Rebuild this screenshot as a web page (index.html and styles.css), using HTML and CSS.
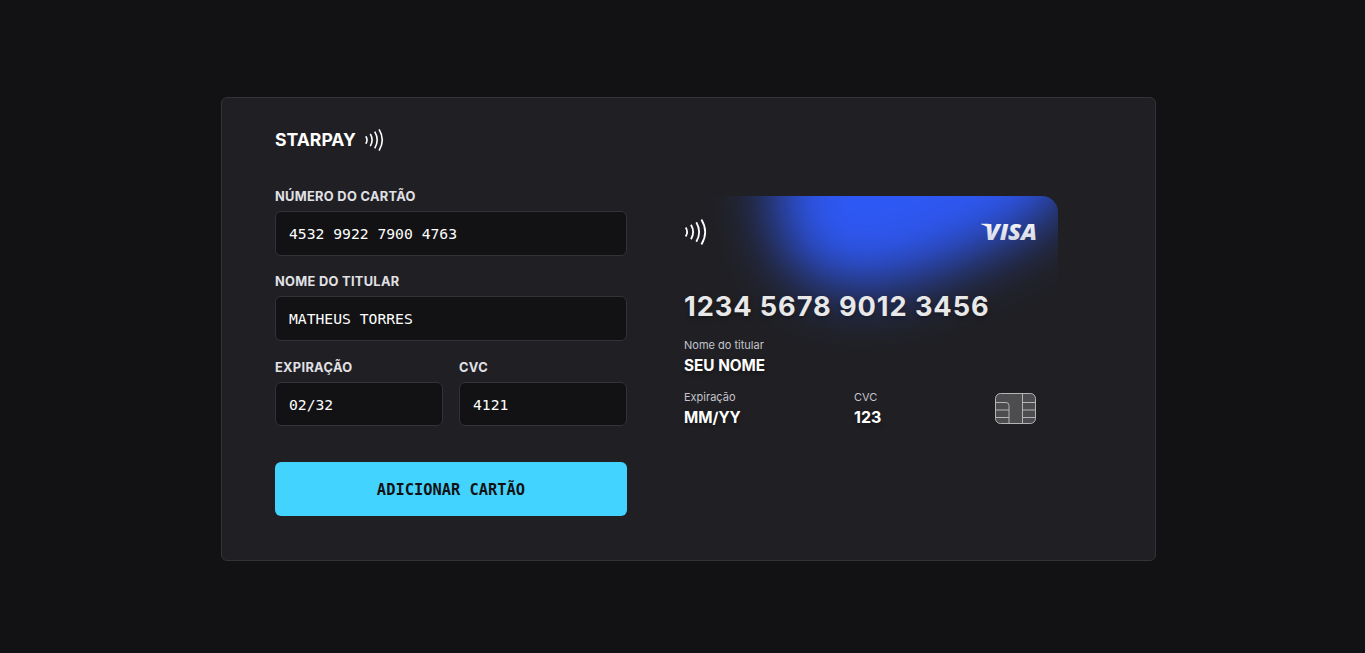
FILE: index.html
```
<!DOCTYPE html>
<html lang="pt-BR">
<head>
<meta charset="utf-8">
<title>Starpay</title>
<link rel="stylesheet" href="styles.css">
</head>
<body>
<main class="panel">
  <header class="brand">
    <span>STARPAY</span>
    <svg class="brand-waves" viewBox="0 0 22 26" fill="none" stroke="currentColor" stroke-width="1.9"><path d="M.7 8.5Q3.6 13 .7 17.4M6 5.7Q10.3 13 6 20.2M11.3 3.2Q17 13 11.3 22.8M16.4.5Q24 13 16.4 25.5"/></svg>
  </header>
  <div class="content">
    <form class="form">
      <label class="field"><span>NÚMERO DO CARTÃO</span><input type="text" value="4532 9922 7900 4763"></label>
      <label class="field"><span>NOME DO TITULAR</span><input type="text" value="MATHEUS TORRES"></label>
      <div class="pair">
        <label class="field"><span>EXPIRAÇÃO</span><input type="text" value="02/32"></label>
        <label class="field"><span>CVC</span><input type="text" value="4121"></label>
      </div>
      <button class="submit" type="button">ADICIONAR CARTÃO</button>
    </form>
    <section class="card">
      <svg class="glow" viewBox="0 0 396 252"><path d="M114-90L114 20Q126 94 208 91Q300 76 399 10L426-90Z" fill="#2e58f3"/></svg>
      <div class="card-top">
        <svg class="card-waves" viewBox="0 0 22 26" fill="none" stroke="currentColor" stroke-width="1.8"><path d="M.7 8.5Q3.6 13 .7 17.4M6 5.7Q10.3 13 6 20.2M11.3 3.2Q17 13 11.3 22.8M16.4.5Q24 13 16.4 25.5"/></svg>
        <svg class="visa" viewBox="0 0 56 18">
          <defs><linearGradient id="silver" x1="0" y1="0" x2="0" y2="1"><stop offset="0" stop-color="#fff"/><stop offset="1" stop-color="#cdd1e0"/></linearGradient></defs>
          <path d="M0 .8H7.2Q8.8 1 9.2 2.5L10.5 9Q7.5 3 0 1.2Z" fill="#f4f5fb"/>
          <text x="4" y="16.6" textLength="52" lengthAdjust="spacingAndGlyphs" fill="url(#silver)">VISA</text>
        </svg>
      </div>
      <div class="number">1234 5678 9012 3456</div>
      <div class="holder"><span class="caption">Nome do titular</span><strong>SEU NOME</strong></div>
      <div class="details">
        <div><span class="caption">Expiração</span><strong>MM/YY</strong></div>
        <div><span class="caption">CVC</span><strong class="digits">123</strong></div>
        <svg class="chip" viewBox="0 0 42 32" fill="none" stroke="#b4b4b6"><rect x=".5" y=".5" width="40" height="30" rx="5" fill="#4d4d50"/><path d="M.5 9.5H11Q14 9.5 14 12.5V30.5M27.5 .5V30.5M.5 17H14M.5 24.5H14M27.5 9.5H40.5M27.5 17H40.5M27.5 24.5H40.5"/></svg>
      </div>
    </section>
  </div>
</main>
</body>
</html>
```
FILE: styles.css
```
* { box-sizing: border-box; }
body {
  margin: 0;
  height: 653px;
  padding: 97px 0 0 221px;
  overflow: hidden;
  background: #121214;
  color: #fff;
  font-family: Inter, sans-serif;
}
.panel {
  width: 935px;
  height: 464px;
  padding: 28px 53px;
  background: #202024;
  border: 1px solid #323238;
  border-radius: 6px;
}
.brand {
  display: flex;
  align-items: center;
  gap: 9px;
  height: 28px;
  font-size: 17.6px;
  line-height: 28px;
  font-weight: 700;
}
.brand-waves { width: 19px; height: 22px; }
.content { display: flex; gap: 35px; padding-top: 36px; }
.form { width: 352px; }
.field { display: block; height: 85.4px; }
.field span {
  display: block;
  height: 21px;
  line-height: 14px;
  font-size: 12.8px;
  font-weight: 700;
  letter-spacing: .32px;
  color: #e1e1e6;
}
.field input {
  display: block;
  width: 100%;
  height: 44.6px;
  padding: 0 13px;
  border: 1px solid #323238;
  border-radius: 6px;
  background: #121214;
  color: #fff;
  font: 14.7px "DejaVu Sans Mono", monospace;
}
.pair { display: grid; grid-template-columns: 1fr 1fr; gap: 16px; }
.submit {
  display: block;
  width: 100%;
  height: 54px;
  margin-top: 15.6px;
  padding: 2px 0 0;
  border: 0;
  border-radius: 6px;
  background: #42d3ff;
  color: #121214;
  font: bold 15.4px "DejaVu Sans Mono", monospace;
}
.card {
  position: relative;
  width: 396px;
  height: 252px;
  margin-top: 6px;
  padding: 22px;
  overflow: hidden;
  border-radius: 16px;
}
.glow {
  position: absolute;
  inset: 0;
  width: 396px;
  height: 252px;
  overflow: visible;
  filter: blur(30px);
}
.card-top, .number, .holder, .details { position: relative; }
.card-top { display: flex; justify-content: space-between; height: 70px; }
.card-waves { width: 22px; height: 26px; margin: .5px 0 0 .5px; }
.visa {
  width: 56px;
  height: 18px;
  margin: 5px -1px 0 0;
  overflow: visible;
  font: italic 800 22px "Open Sans", sans-serif;
}
.number {
  height: 51px;
  line-height: 37px;
  font-size: 27.2px;
  font-weight: 700;
  letter-spacing: .92px;
  color: #e8e8e8;
  text-shadow: 0 2px 4px rgba(0, 0, 0, .35);
  white-space: nowrap;
}
.caption {
  display: block;
  height: 16px;
  line-height: 13px;
  font-size: 11px;
  color: #c4c4cc;
}
.card strong {
  display: block;
  line-height: 21px;
  font-size: 15.3px;
  font-weight: 700;
  text-shadow: 0 2px 4px rgba(0, 0, 0, .35);
}
.card .digits { font-size: 16px; line-height: 20px; }
.holder { height: 52px; }
.details { display: grid; grid-template-columns: 170px 1fr 41px; }
.chip { width: 42px; height: 32px; margin-top: 2px; }
```
